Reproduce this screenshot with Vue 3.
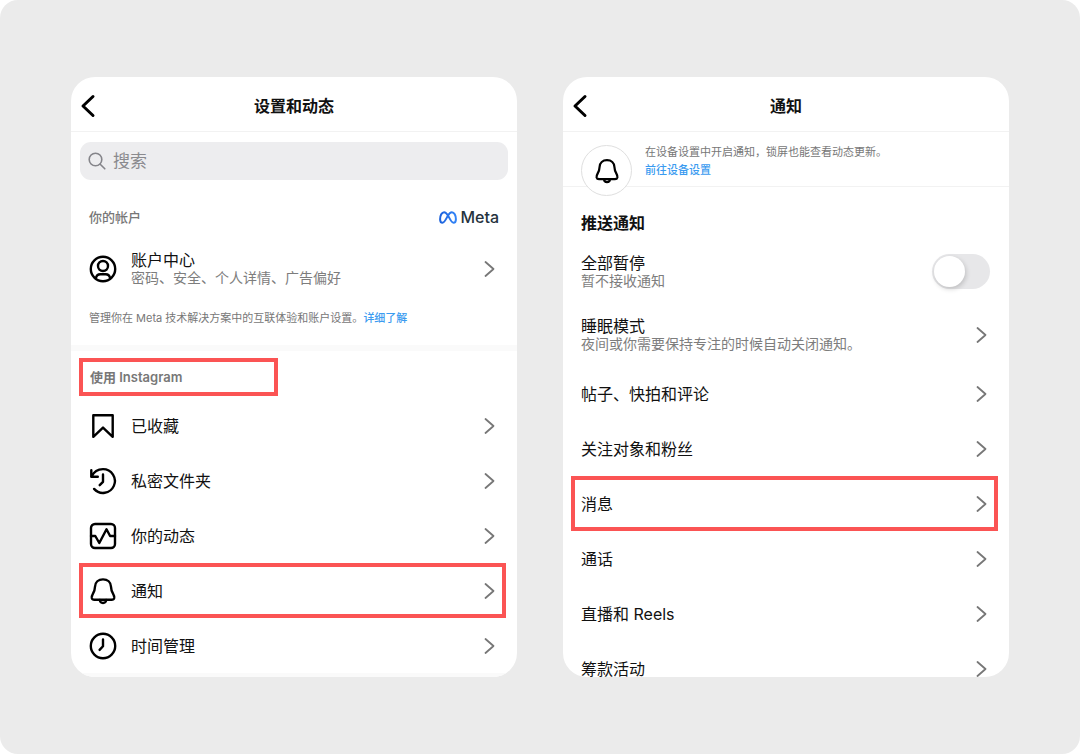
<template>
  <main class="stage">
    <section class="phone">
      <header class="topbar">
        <button class="back" type="button" aria-label="返回">
          <svg width="16" height="24" viewBox="0 0 16 24"><path d="M13 2.500 3 12l10 9.500" /></svg>
        </button>
        <h1>设置和动态</h1>
      </header>

      <label class="search">
        <svg width="18" height="18" viewBox="0 0 18 18">
          <circle cx="7.500" cy="7.500" r="6.300" />
          <path d="m12.200 12.200 4.600 4.600" />
        </svg>
        <input v-model="query" type="search" placeholder="搜索" aria-label="搜索">
      </label>

      <div class="account-head">
        <h2 class="caption">你的帐户</h2>
        <span class="meta">
          <svg width="18" height="13" viewBox="0 0 18 13">
            <defs>
              <linearGradient id="metaBlue" x1="0" x2="1">
                <stop offset="0" stop-color="#1d62dc" />
                <stop offset="1" stop-color="#3284f7" />
              </linearGradient>
            </defs>
            <path
              stroke="url(#metaBlue)"
              d="M9 4.500C7.700 2.300 6.500 1.200 5.100 1.200 2.800 1.200 1.100 4.600 1.100 8.200c0 2.200.9 3.600 2.400 3.600C5.400 11.800 6.600 8.900 9 4.500 10.200 2.300 11.500 1.200 12.900 1.200c2.300 0 4 3.400 4 7 0 2.200-.9 3.600-2.400 3.600C12.600 11.800 11.400 8.900 9 4.500Z"
            />
          </svg>
          Meta
        </span>
      </div>

      <button class="row account" type="button">
        <svg class="icon" width="28" height="28" viewBox="0 0 28 28">
          <circle cx="14" cy="14" r="12.200" />
          <circle cx="14" cy="11" r="5" />
          <path d="M6.800 23.500c.5-2.800 2.200-4.200 4.600-4.200h5.200c2.400 0 4.100 1.400 4.600 4.200" />
        </svg>
        <span class="text">
          <span class="label">账户中心</span>
          <span class="sub">密码、安全、个人详情、广告偏好</span>
        </span>
        <svg class="chevron" width="12" height="18" viewBox="0 0 12 18"><path d="m2.500 2 8 7-8 7" /></svg>
      </button>

      <p class="note">管理你在 Meta 技术解决方案中的互联体验和账户设置。<a href="#">详细了解</a></p>

      <div class="divider"></div>

      <h2 class="caption section marked">使用 Instagram</h2>

      <button
        v-for="item in usageItems"
        :key="item.name"
        class="row"
        :class="{ marked: item.marked }"
        type="button"
      >
        <svg class="icon" width="28" height="28" viewBox="0 0 28 28">
          <path v-for="d in item.paths" :key="d" :d="d" />
        </svg>
        <span class="label">{{ item.name }}</span>
        <svg class="chevron" width="12" height="18" viewBox="0 0 12 18"><path d="m2.500 2 8 7-8 7" /></svg>
      </button>
      <div class="divider"></div>
    </section>

    <section class="phone">
      <header class="topbar">
        <button class="back" type="button" aria-label="返回">
          <svg width="16" height="24" viewBox="0 0 16 24"><path d="M13 2.500 3 12l10 9.500" /></svg>
        </button>
        <h1>通知</h1>
      </header>

      <div class="notice">
        <span class="bell">
          <svg class="icon" width="28" height="28" viewBox="0 0 28 28">
            <path v-for="d in bell" :key="d" :d="d" />
          </svg>
        </span>
        <p>
          在设备设置中开启通知，锁屏也能查看动态更新。<br>
          <a href="#">前往设备设置</a>
        </p>
      </div>

      <h2 class="push-title">推送通知</h2>

      <label class="row pause">
        <span class="text">
          <span class="label">全部暂停</span>
          <span class="sub">暂不接收通知</span>
        </span>
        <input v-model="paused" class="switch" type="checkbox">
      </label>

      <button
        v-for="item in pushItems"
        :key="item.name"
        class="row"
        :class="{ marked: item.marked, tall: item.sub }"
        type="button"
      >
        <span class="text">
          <span class="label">{{ item.name }}</span>
          <span v-if="item.sub" class="sub">{{ item.sub }}</span>
        </span>
        <svg class="chevron" width="12" height="18" viewBox="0 0 12 18"><path d="m2.500 2 8 7-8 7" /></svg>
      </button>
    </section>
  </main>
</template>

<script setup>
import { ref } from 'vue';

const query = ref('');
const paused = ref(false);

const bell = [
  'M14 2.400c-4.600 0-7.800 3-8 7.300-.1 3-.7 4.600-2 6.900-1 1.700-1.500 3-1.200 4.400.3 1.200 1.200 1.800 2.600 1.800h17.200c1.400 0 2.300-.6 2.600-1.800.3-1.400-.2-2.700-1.200-4.400-1.300-2.300-1.900-3.900-2-6.900-.2-4.300-3.400-7.300-8-7.300Z',
  'M10.800 23c.2 2 1.500 3 3.200 3s3-1 3.200-3',
];

const usageItems = [
  {
    name: '已收藏',
    paths: ['M4.300 3.200h19.400v21.600L14 15.600l-9.700 9.200Z'],
  },
  {
    name: '私密文件夹',
    paths: [
      'M2.300 3.200v6.600h6.500',
      'M2.800 9.400C4.700 5 9 2.100 14 2.100a11.900 11.900 0 1 1-8.900 19.800',
      'M14 7.500v7.300l-3.300 3.400',
    ],
  },
  {
    name: '你的动态',
    paths: [
      'M6 2h16A4 4 0 0 1 26 6v16a4 4 0 0 1-4 4H6A4 4 0 0 1 2 22V6A4 4 0 0 1 6 2Z',
      'M2 14h4.300l4 7 7.200-13.800 3.600 6.800H26',
    ],
  },
  { name: '通知', marked: true, paths: bell },
  {
    name: '时间管理',
    paths: ['M14 1.800a12.200 12.200 0 1 1 0 24.400 12.200 12.200 0 0 1 0-24.400Z', 'M14 7.500v6.800l-3.400 3.600'],
  },
];

const pushItems = [
  { name: '睡眠模式', sub: '夜间或你需要保持专注的时候自动关闭通知。' },
  { name: '帖子、快拍和评论' },
  { name: '关注对象和粉丝' },
  { name: '消息', marked: true },
  { name: '通话' },
  { name: '直播和 Reels' },
  { name: '筹款活动' },
];
</script>

<style>
body {
  margin: 0;
  background: #fff;
}
</style>

<style scoped>
.stage {
  box-sizing: border-box;
  display: grid;
  grid-template-columns: 1fr 1fr;
  gap: 46px;
  height: 100vh;
  padding: 77px 71px;
  border-radius: 18px;
  background: #ebebeb;
  color: #111;
  font-family: Inter, "Noto Sans CJK SC", sans-serif;
}

.phone {
  display: flex;
  flex-direction: column;
  min-width: 0;
  overflow: hidden;
  border-radius: 24px;
  background: #fff;
}

.phone > * {
  flex-shrink: 0;
}

h1,
h2,
p {
  margin: 0;
}

button {
  border: 0;
  background: none;
  color: inherit;
  font: inherit;
  cursor: pointer;
}

a {
  color: #3b9bf0;
  font-weight: 500;
  text-decoration: none;
}

svg {
  flex: none;
  fill: none;
  stroke: #000;
  stroke-linecap: round;
  stroke-linejoin: round;
}

.topbar {
  display: grid;
  grid-template-columns: 24px 1fr 24px;
  align-items: center;
  height: 55px;
  padding: 4px 9px 0;
  box-sizing: border-box;
  border-bottom: 1px solid #f2f2f2;
}

.back {
  display: flex;
  padding: 0;
}

.back svg {
  stroke-width: 3;
}

h1 {
  font-size: 16px;
  font-weight: 700;
  line-height: 24px;
  text-align: center;
}

.search {
  display: flex;
  align-items: center;
  gap: 7px;
  height: 38px;
  margin: 10px 9px 0;
  padding: 0 8px;
  border-radius: 11px;
  background: #ededef;
}

.search svg {
  stroke: #85858a;
  stroke-width: 1.6;
}

.search input {
  flex: 1;
  min-width: 0;
  padding: 0;
  border: 0;
  outline: 0;
  background: none;
  font: inherit;
  font-size: 17px;
}

.search input::placeholder {
  color: #8a8a8e;
}

.account-head {
  display: flex;
  align-items: center;
  justify-content: space-between;
  margin-top: 25px;
  padding: 0 18px;
}

.caption {
  color: #777;
  font-size: 13px;
  font-weight: 500;
  line-height: 24px;
}

.meta {
  display: flex;
  align-items: center;
  gap: 3px;
  color: #25333d;
  font-size: 16px;
  font-weight: 500;
  line-height: 24px;
}

.meta svg {
  stroke-width: 2;
}

.row {
  box-sizing: border-box;
  display: flex;
  align-items: center;
  gap: 14px;
  height: 55px;
  margin: 0 11px 0 8px;
  padding: 0 7px 0 6px;
  border: 4px solid transparent;
  text-align: left;
}

.row.marked,
.section.marked {
  border: 4px solid #fb5454;
}

.account {
  margin-top: 12px;
}

.tall {
  height: 63px;
}

.icon {
  stroke-width: 2.4;
}

.text {
  display: flex;
  flex-direction: column;
}

.label {
  font-size: 16px;
  line-height: 18px;
}

.sub {
  color: #7d7d7d;
  font-size: 14px;
  line-height: 18px;
}

.chevron {
  margin-left: auto;
  stroke: #777;
  stroke-width: 1.8;
}

.note {
  margin: 12px 18px 0;
  color: #777;
  font-size: 11px;
  line-height: 20px;
}

.divider {
  height: 6px;
  margin-top: 17px;
  background: #fafafa;
}

.row + .divider {
  margin-top: 0;
}

.section {
  width: 184px;
  margin: 7px 8px 2px;
  padding: 3px 0 3px 7px;
  font-weight: 600;
}

.notice {
  display: flex;
  align-items: flex-start;
  gap: 13px;
  height: 55px;
  box-sizing: border-box;
  padding: 11px 18px 0;
  border-bottom: 1px solid #f2f2f2;
}

.bell {
  display: flex;
  flex: none;
  align-items: center;
  justify-content: center;
  width: 49px;
  height: 49px;
  margin-top: 2px;
  border: 1px solid #dfdfdf;
  border-radius: 50%;
  background: #fff;
}

.bell svg {
  width: 26px;
  height: 26px;
}

.notice p {
  color: #777;
  font-size: 11px;
  line-height: 18px;
}

.push-title {
  margin: 24px 18px 5px;
  font-size: 16px;
  font-weight: 700;
  line-height: 24px;
}

.pause {
  height: 63px;
  margin-right: 8px;
}

.switch {
  appearance: none;
  flex: none;
  width: 58px;
  height: 35px;
  margin: 0 0 0 auto;
  padding: 2px;
  border-radius: 18px;
  background: #e7e7e9;
  cursor: pointer;
}

.switch::before {
  content: '';
  display: block;
  width: 31px;
  height: 31px;
  border-radius: 50%;
  background: #fff;
  box-shadow: 1px 2px 5px rgba(0, 0, 0, 0.18);
}

.switch:checked {
  background: #34c759;
}

.switch:checked::before {
  margin-left: 23px;
}
</style>
